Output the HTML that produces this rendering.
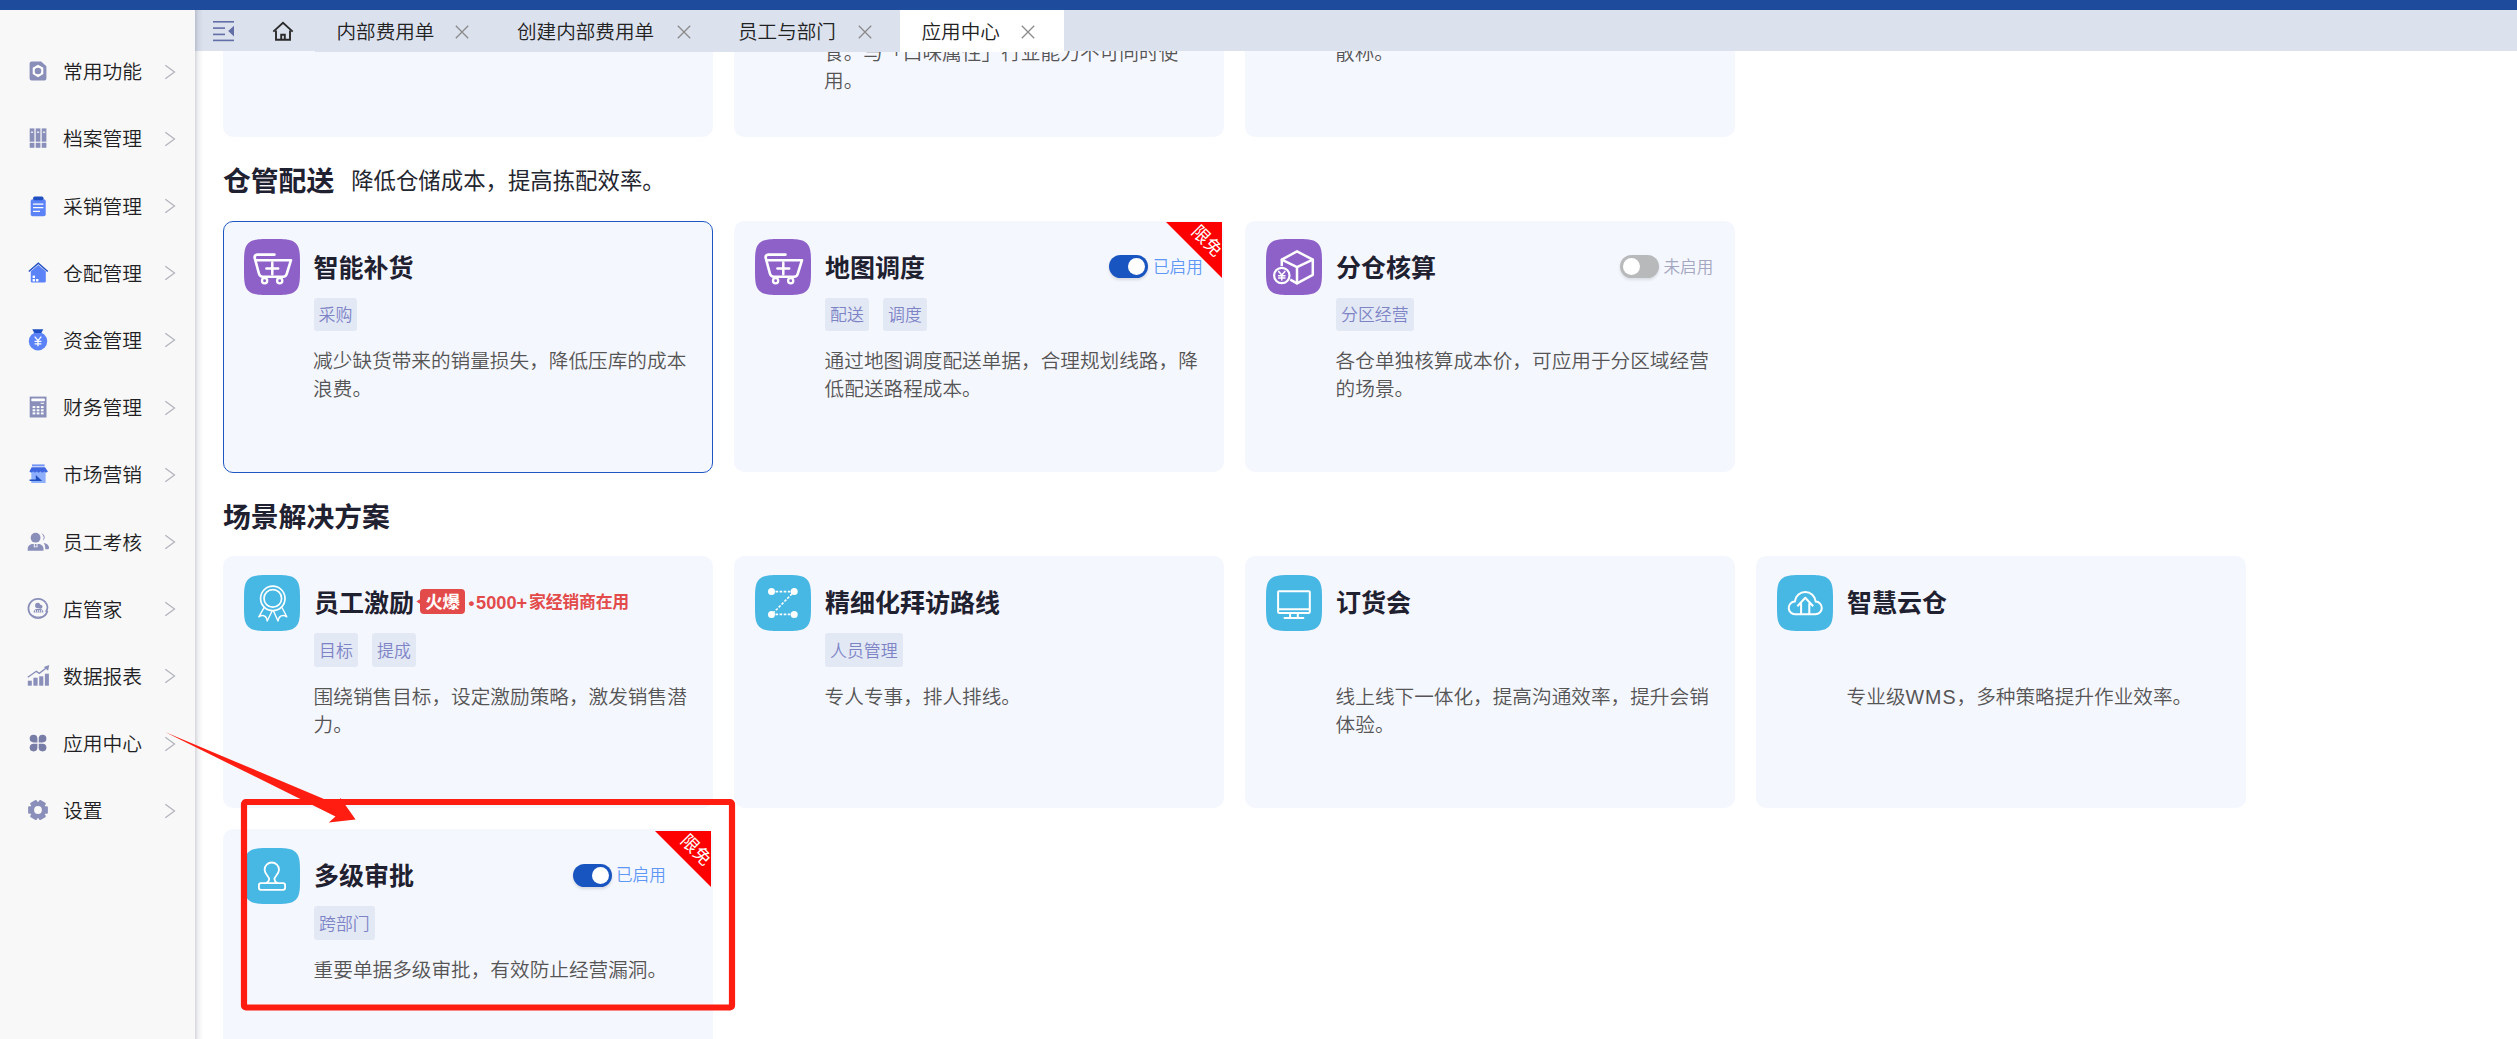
<!DOCTYPE html><html lang="zh-CN"><head><meta charset="utf-8"><title>应用中心</title><style>
*{box-sizing:border-box;margin:0;padding:0}
html,body{width:2517px;height:1039px;overflow:hidden;background:#fff}
body{font-family:"Liberation Sans","Noto Sans CJK SC",sans-serif;position:relative;color:#222;font-weight:350}
.abs{position:absolute}
#topbar{left:0;top:0;width:2517px;height:10px;background:#1e4b9c}
#side{left:0;top:10px;width:195px;height:1029px;background:#f8f8f9}
#sideshadow{left:195px;top:10px;width:8px;height:1029px;background:linear-gradient(to right,rgba(45,55,75,.20),rgba(45,55,75,.07) 40%,rgba(45,55,75,0))}
.mi{position:absolute;left:0;width:195px;height:30px}
.mi .tx{position:absolute;left:63px;top:1px;font-size:19.8px;line-height:30px;color:#1f1f24;white-space:nowrap}
.mi svg.ic{position:absolute;left:26.4px;top:3px;width:24px;height:24px}
.mi svg.ch{position:absolute;left:163px;top:7.3px;width:14px;height:16px}
#tabbar{left:195px;top:10px;width:2322px;height:41px;background:#dce1ee}
.tab{position:absolute;top:10px;height:41.5px;background:#dce1ee;font-size:19.6px;line-height:41.5px;color:#222;white-space:nowrap}
.tab.act{background:#fff}
.tab .t{position:absolute;top:2.2px;margin-left:-0.5px}
.tab svg{position:absolute;top:14.5px;width:14px;height:14px}
#content{left:195px;top:51px;width:2322px;height:988px;overflow:hidden}
.card{position:absolute;width:490px;height:251.5px;background:#f5f7fe;border-radius:10px}
.card.sel{border:1.5px solid #1f57c2}
.card .ico{position:absolute;left:21px;top:18.5px;width:56px;height:56px}
.card .ttl{position:absolute;left:91px;top:28px;font-size:25px;line-height:38px;font-weight:700;color:#1f2130;white-space:nowrap}
.card .tags{position:absolute;left:91px;top:77.5px;height:32.5px;white-space:nowrap;font-size:0}
.card .tag{display:inline-block;overflow:hidden;height:32.5px;line-height:32.5px;padding:0 5px;margin-right:14.3px;background:#e3e8f5;border-radius:3px;color:#7d84c6;font-size:16.9px;vertical-align:top}
.card .desc{position:absolute;left:90.6px;top:125.5px;width:380px;font-size:19.65px;line-height:28px;color:#555}
.sw{position:absolute;width:39px;height:23px;border-radius:12px}
.sw i{position:absolute;top:3px;width:17.4px;height:17.4px;border-radius:50%;background:#fff}
.sw.on{background:#1955c0;box-shadow:0 2px 3px rgba(0,0,0,.12)}
.sw.on i{left:19px}
.sw.off{background:#b8b9bb;box-shadow:0 2px 3px rgba(0,0,0,.10)}
.sw.off i{left:2.6px}
.swt{position:absolute;font-size:16.6px;line-height:24px;white-space:nowrap;margin-top:1.5px}
.swt.on{color:#5f97f6}
.swt.off{color:#a3a6c0}
.rib{position:absolute;width:56px;height:56px;overflow:hidden}
.rib:before{content:"";position:absolute;left:0;top:0;border-style:solid;border-width:0 56px 56px 0;border-color:transparent #fe0000 transparent transparent}
.rib span{position:absolute;left:14.5px;top:9.1px;width:52px;text-align:center;font-size:17.5px;font-weight:400;line-height:20px;color:#fff;transform:rotate(45deg);transform-origin:50% 50%;white-space:nowrap}
.sec{position:absolute;left:28px;white-space:nowrap;color:#1f2130}
.sec b{font-size:27.8px;font-weight:700;line-height:40px;position:relative;top:1.5px}
.sec span{font-size:22.4px;line-height:40px;margin-left:17px;color:#24262f;font-weight:400}
</style></head><body>
<div id="content" class="abs">
<div class="card" style="left:28px;top:-166px"></div>
<div class="card" style="left:539px;top:-166px"></div>
<div class="card" style="left:1050px;top:-166px"></div>
<div class="abs" style="left:629px;top:-12.5px;width:380px;font-size:19.700px;line-height:28px;color:#555">食。与「口味属性」行业能力不可同时使用。</div>
<div class="abs" style="left:1140px;top:-12.5px;width:380px;font-size:19.700px;line-height:28px;color:#555">散称。</div>
<div class="sec" style="top:109px"><b>仓管配送</b><span>降低仓储成本，提高拣配效率。</span></div>
<div class="card sel" style="left:28px;top:170px"><div style="position:absolute;left:-1.5px;top:-1.5px;width:490px;height:251.5px"><svg class="ico" style="top:18.5px" viewBox="0 0 56 56"><path d="M56.00 28.00L55.98 34.87L55.93 37.55L55.84 39.57L55.71 41.25L55.54 42.71L55.34 44.01L55.10 45.18L54.82 46.24L54.50 47.22L54.15 48.13L53.75 48.97L53.31 49.74L52.83 50.46L52.31 51.12L51.74 51.74L51.12 52.31L50.46 52.83L49.74 53.31L48.97 53.75L48.13 54.15L47.22 54.50L46.24 54.82L45.18 55.10L44.01 55.34L42.71 55.54L41.25 55.71L39.57 55.84L37.55 55.93L34.87 55.98L28.00 56.00L21.13 55.98L18.45 55.93L16.43 55.84L14.75 55.71L13.29 55.54L11.99 55.34L10.82 55.10L9.76 54.82L8.78 54.50L7.87 54.15L7.03 53.75L6.26 53.31L5.54 52.83L4.88 52.31L4.26 51.74L3.69 51.12L3.17 50.46L2.69 49.74L2.25 48.97L1.85 48.13L1.50 47.22L1.18 46.24L0.90 45.18L0.66 44.01L0.46 42.71L0.29 41.25L0.16 39.57L0.07 37.55L0.02 34.87L0.00 28.00L0.02 21.13L0.07 18.45L0.16 16.43L0.29 14.75L0.46 13.29L0.66 11.99L0.90 10.82L1.18 9.76L1.50 8.78L1.85 7.87L2.25 7.03L2.69 6.26L3.17 5.54L3.69 4.88L4.26 4.26L4.88 3.69L5.54 3.17L6.26 2.69L7.03 2.25L7.87 1.85L8.78 1.50L9.76 1.18L10.82 0.90L11.99 0.66L13.29 0.46L14.75 0.29L16.43 0.16L18.45 0.07L21.13 0.02L28.00 0.00L34.87 0.02L37.55 0.07L39.57 0.16L41.25 0.29L42.71 0.46L44.01 0.66L45.18 0.90L46.24 1.18L47.22 1.50L48.13 1.85L48.97 2.25L49.74 2.69L50.46 3.17L51.12 3.69L51.74 4.26L52.31 4.88L52.83 5.54L53.31 6.26L53.75 7.03L54.15 7.87L54.50 8.78L54.82 9.76L55.10 10.82L55.34 11.99L55.54 13.29L55.71 14.75L55.84 16.43L55.93 18.45L55.98 21.13Z" fill="#8e61c9"/><g stroke="#fff" fill="none" stroke-linecap="round" stroke-linejoin="round" stroke-width="2.600"><path d="M30.500 15.600H13.200a2.600 2.600 0 0 0-2.500 3.300l4.200 15.600a4.200 4.200 0 0 0 4 3.200h20.300a3.600 3.600 0 0 0 3.500-2.700L47 21.200H11.300"/><path d="M22.400 29.400h11.800M28.300 23.600v11.600" stroke-width="2.500"/><circle cx="20.600" cy="41.800" r="2.600" stroke-width="2.300"/><circle cx="35.700" cy="41.800" r="2.600" stroke-width="2.300"/></g></svg><div class="ttl">智能补货</div><div class="tags" style="top:77.7px;height:32.7px"><span class="tag" style="height:32.7px;line-height:36.30px">采购</span></div><div class="desc" style="top:126.9px">减少缺货带来的销量损失，降低压库的成本浪费。</div></div></div>
<div class="card" style="left:539px;top:169.5px"><svg class="ico" style="top:18.5px" viewBox="0 0 56 56"><path d="M56.00 28.00L55.98 34.87L55.93 37.55L55.84 39.57L55.71 41.25L55.54 42.71L55.34 44.01L55.10 45.18L54.82 46.24L54.50 47.22L54.15 48.13L53.75 48.97L53.31 49.74L52.83 50.46L52.31 51.12L51.74 51.74L51.12 52.31L50.46 52.83L49.74 53.31L48.97 53.75L48.13 54.15L47.22 54.50L46.24 54.82L45.18 55.10L44.01 55.34L42.71 55.54L41.25 55.71L39.57 55.84L37.55 55.93L34.87 55.98L28.00 56.00L21.13 55.98L18.45 55.93L16.43 55.84L14.75 55.71L13.29 55.54L11.99 55.34L10.82 55.10L9.76 54.82L8.78 54.50L7.87 54.15L7.03 53.75L6.26 53.31L5.54 52.83L4.88 52.31L4.26 51.74L3.69 51.12L3.17 50.46L2.69 49.74L2.25 48.97L1.85 48.13L1.50 47.22L1.18 46.24L0.90 45.18L0.66 44.01L0.46 42.71L0.29 41.25L0.16 39.57L0.07 37.55L0.02 34.87L0.00 28.00L0.02 21.13L0.07 18.45L0.16 16.43L0.29 14.75L0.46 13.29L0.66 11.99L0.90 10.82L1.18 9.76L1.50 8.78L1.85 7.87L2.25 7.03L2.69 6.26L3.17 5.54L3.69 4.88L4.26 4.26L4.88 3.69L5.54 3.17L6.26 2.69L7.03 2.25L7.87 1.85L8.78 1.50L9.76 1.18L10.82 0.90L11.99 0.66L13.29 0.46L14.75 0.29L16.43 0.16L18.45 0.07L21.13 0.02L28.00 0.00L34.87 0.02L37.55 0.07L39.57 0.16L41.25 0.29L42.71 0.46L44.01 0.66L45.18 0.90L46.24 1.18L47.22 1.50L48.13 1.85L48.97 2.25L49.74 2.69L50.46 3.17L51.12 3.69L51.74 4.26L52.31 4.88L52.83 5.54L53.31 6.26L53.75 7.03L54.15 7.87L54.50 8.78L54.82 9.76L55.10 10.82L55.34 11.99L55.54 13.29L55.71 14.75L55.84 16.43L55.93 18.45L55.98 21.13Z" fill="#8e61c9"/><g stroke="#fff" fill="none" stroke-linecap="round" stroke-linejoin="round" stroke-width="2.600"><path d="M30.500 15.600H13.200a2.600 2.600 0 0 0-2.500 3.300l4.200 15.600a4.200 4.200 0 0 0 4 3.200h20.300a3.600 3.600 0 0 0 3.500-2.700L47 21.200H11.300"/><path d="M22.400 29.400h11.800M28.300 23.600v11.600" stroke-width="2.500"/><circle cx="20.600" cy="41.800" r="2.600" stroke-width="2.300"/><circle cx="35.700" cy="41.800" r="2.600" stroke-width="2.300"/></g></svg><div class="ttl">地图调度</div><div class="tags" style="top:77.7px;height:32.7px"><span class="tag" style="height:32.7px;line-height:36.30px">配送</span><span class="tag" style="height:32.7px;line-height:36.30px">调度</span></div><div class="desc" style="top:126.9px">通过地图调度配送单据，合理规划线路，降低配送路程成本。</div><div class="rib" style="left:432px;top:1.5px"><span>限免</span></div><div class="sw on" style="left:374.79999999999995px;top:34.5px"><i></i></div><div class="swt on" style="left:419px;top:33.5px">已启用</div></div>
<div class="card" style="left:1050px;top:169.5px"><svg class="ico" style="top:18.5px" viewBox="0 0 56 56"><path d="M56.00 28.00L55.98 34.87L55.93 37.55L55.84 39.57L55.71 41.25L55.54 42.71L55.34 44.01L55.10 45.18L54.82 46.24L54.50 47.22L54.15 48.13L53.75 48.97L53.31 49.74L52.83 50.46L52.31 51.12L51.74 51.74L51.12 52.31L50.46 52.83L49.74 53.31L48.97 53.75L48.13 54.15L47.22 54.50L46.24 54.82L45.18 55.10L44.01 55.34L42.71 55.54L41.25 55.71L39.57 55.84L37.55 55.93L34.87 55.98L28.00 56.00L21.13 55.98L18.45 55.93L16.43 55.84L14.75 55.71L13.29 55.54L11.99 55.34L10.82 55.10L9.76 54.82L8.78 54.50L7.87 54.15L7.03 53.75L6.26 53.31L5.54 52.83L4.88 52.31L4.26 51.74L3.69 51.12L3.17 50.46L2.69 49.74L2.25 48.97L1.85 48.13L1.50 47.22L1.18 46.24L0.90 45.18L0.66 44.01L0.46 42.71L0.29 41.25L0.16 39.57L0.07 37.55L0.02 34.87L0.00 28.00L0.02 21.13L0.07 18.45L0.16 16.43L0.29 14.75L0.46 13.29L0.66 11.99L0.90 10.82L1.18 9.76L1.50 8.78L1.85 7.87L2.25 7.03L2.69 6.26L3.17 5.54L3.69 4.88L4.26 4.26L4.88 3.69L5.54 3.17L6.26 2.69L7.03 2.25L7.87 1.85L8.78 1.50L9.76 1.18L10.82 0.90L11.99 0.66L13.29 0.46L14.75 0.29L16.43 0.16L18.45 0.07L21.13 0.02L28.00 0.00L34.87 0.02L37.55 0.07L39.57 0.16L41.25 0.29L42.71 0.46L44.01 0.66L45.18 0.90L46.24 1.18L47.22 1.50L48.13 1.85L48.97 2.25L49.74 2.69L50.46 3.17L51.12 3.69L51.74 4.26L52.31 4.88L52.83 5.54L53.31 6.26L53.75 7.03L54.15 7.87L54.50 8.78L54.82 9.76L55.10 10.82L55.34 11.99L55.54 13.29L55.71 14.75L55.84 16.43L55.93 18.45L55.98 21.13Z" fill="#8e61c9"/><g stroke="#fff" fill="none" stroke-linecap="round" stroke-linejoin="round" stroke-width="2.500"><path d="M31 12.300L46.800 20.700V35.800L31 44.300 15.800 35.800V20.700z"/><path d="M15.800 20.700L31 28.100 46.800 20.700M31 28.100V44.300"/></g><circle cx="15.800" cy="36.500" r="9.500" fill="#8e61c9"/><circle cx="15.800" cy="36.500" r="7.700" stroke="#fff" stroke-width="2.200" fill="#8e61c9"/><g stroke="#fff" stroke-width="1.500" fill="none" stroke-linecap="round"><path d="M12.700 32.400l3.100 3.700 3.100-3.700M15.800 36.100v5M12.600 36.700h6.400M12.600 39h6.400"/></g></svg><div class="ttl">分仓核算</div><div class="tags" style="top:77.7px;height:32.7px"><span class="tag" style="height:32.7px;line-height:36.30px">分区经营</span></div><div class="desc" style="top:126.9px">各仓单独核算成本价，可应用于分区域经营的场景。</div><div class="sw off" style="left:375px;top:34.5px"><i></i></div><div class="swt off" style="left:418.5px;top:33.5px">未启用</div></div>
<div class="sec" style="top:445px"><b>场景解决方案</b></div>
<div class="card" style="left:28px;top:505.29999999999995px"><svg class="ico" style="top:18.5px" viewBox="0 0 56 56"><path d="M56.00 28.00L55.98 34.87L55.93 37.55L55.84 39.57L55.71 41.25L55.54 42.71L55.34 44.01L55.10 45.18L54.82 46.24L54.50 47.22L54.15 48.13L53.75 48.97L53.31 49.74L52.83 50.46L52.31 51.12L51.74 51.74L51.12 52.31L50.46 52.83L49.74 53.31L48.97 53.75L48.13 54.15L47.22 54.50L46.24 54.82L45.18 55.10L44.01 55.34L42.71 55.54L41.25 55.71L39.57 55.84L37.55 55.93L34.87 55.98L28.00 56.00L21.13 55.98L18.45 55.93L16.43 55.84L14.75 55.71L13.29 55.54L11.99 55.34L10.82 55.10L9.76 54.82L8.78 54.50L7.87 54.15L7.03 53.75L6.26 53.31L5.54 52.83L4.88 52.31L4.26 51.74L3.69 51.12L3.17 50.46L2.69 49.74L2.25 48.97L1.85 48.13L1.50 47.22L1.18 46.24L0.90 45.18L0.66 44.01L0.46 42.71L0.29 41.25L0.16 39.57L0.07 37.55L0.02 34.87L0.00 28.00L0.02 21.13L0.07 18.45L0.16 16.43L0.29 14.75L0.46 13.29L0.66 11.99L0.90 10.82L1.18 9.76L1.50 8.78L1.85 7.87L2.25 7.03L2.69 6.26L3.17 5.54L3.69 4.88L4.26 4.26L4.88 3.69L5.54 3.17L6.26 2.69L7.03 2.25L7.87 1.85L8.78 1.50L9.76 1.18L10.82 0.90L11.99 0.66L13.29 0.46L14.75 0.29L16.43 0.16L18.45 0.07L21.13 0.02L28.00 0.00L34.87 0.02L37.55 0.07L39.57 0.16L41.25 0.29L42.71 0.46L44.01 0.66L45.18 0.90L46.24 1.18L47.22 1.50L48.13 1.85L48.97 2.25L49.74 2.69L50.46 3.17L51.12 3.69L51.74 4.26L52.31 4.88L52.83 5.54L53.31 6.26L53.75 7.03L54.15 7.87L54.50 8.78L54.82 9.76L55.10 10.82L55.34 11.99L55.54 13.29L55.71 14.75L55.84 16.43L55.93 18.45L55.98 21.13Z" fill="#47b7e3"/><g stroke="#fff" fill="none" stroke-linecap="round" stroke-linejoin="round" stroke-width="1.700"><circle cx="28.800" cy="23.400" r="12.200"/><circle cx="28.800" cy="23.400" r="8.800"/><path stroke-width="1.400" d="M19.900 32.800L14.800 41.800c3.800-2.600 8-1.300 8.400 4.200L28 36.300"/><path stroke-width="1.400" d="M38.100 32.800L42.800 41.800c-3.800-2.600-8-1.300-8.800 4.200L29.600 36.300"/></g></svg><div class="ttl">员工激励</div><div class="tags" style="top:76.75px;height:34px"><span class="tag" style="height:34px;line-height:37.00px">目标</span><span class="tag" style="height:34px;line-height:37.00px">提成</span></div><div class="desc" style="top:126.7px">围绕销售目标，设定激励策略，激发销售潜力。</div><span style="position:absolute;left:192.700px;top:32.700px;height:24.800px;white-space:nowrap"><svg style="position:absolute;left:0;top:8px;width:6px;height:9px" viewBox="0 0 6 9"><path d="M5.500 1.200L0.300 4.500 5.500 7.800z" fill="#e34b4b"/></svg><b style="position:absolute;left:4.300px;top:0;height:24.800px;width:45px;background:#e34b4b;border-radius:4px"></b><b style="position:absolute;left:4.300px;top:1px;height:24.800px;width:45px;color:#fff;font-size:17.500px;line-height:24.800px;text-align:center;font-weight:700;letter-spacing:-0.3px">火爆</b><b style="position:absolute;left:52.800px;top:1.600px;color:#e34b4b;font-size:16.900px;line-height:24.800px;font-weight:700;white-space:nowrap">•<span style="font-size:18.200px;margin-left:1.700px">5000+</span></b><b style="position:absolute;left:113.400px;top:2px;color:#e34b4b;font-size:16.900px;line-height:24.800px;font-weight:700;white-space:nowrap;letter-spacing:-0.25px">家经销商在用</b></span></div>
<div class="card" style="left:539px;top:505.29999999999995px"><svg class="ico" style="top:18.5px" viewBox="0 0 56 56"><path d="M56.00 28.00L55.98 34.87L55.93 37.55L55.84 39.57L55.71 41.25L55.54 42.71L55.34 44.01L55.10 45.18L54.82 46.24L54.50 47.22L54.15 48.13L53.75 48.97L53.31 49.74L52.83 50.46L52.31 51.12L51.74 51.74L51.12 52.31L50.46 52.83L49.74 53.31L48.97 53.75L48.13 54.15L47.22 54.50L46.24 54.82L45.18 55.10L44.01 55.34L42.71 55.54L41.25 55.71L39.57 55.84L37.55 55.93L34.87 55.98L28.00 56.00L21.13 55.98L18.45 55.93L16.43 55.84L14.75 55.71L13.29 55.54L11.99 55.34L10.82 55.10L9.76 54.82L8.78 54.50L7.87 54.15L7.03 53.75L6.26 53.31L5.54 52.83L4.88 52.31L4.26 51.74L3.69 51.12L3.17 50.46L2.69 49.74L2.25 48.97L1.85 48.13L1.50 47.22L1.18 46.24L0.90 45.18L0.66 44.01L0.46 42.71L0.29 41.25L0.16 39.57L0.07 37.55L0.02 34.87L0.00 28.00L0.02 21.13L0.07 18.45L0.16 16.43L0.29 14.75L0.46 13.29L0.66 11.99L0.90 10.82L1.18 9.76L1.50 8.78L1.85 7.87L2.25 7.03L2.69 6.26L3.17 5.54L3.69 4.88L4.26 4.26L4.88 3.69L5.54 3.17L6.26 2.69L7.03 2.25L7.87 1.85L8.78 1.50L9.76 1.18L10.82 0.90L11.99 0.66L13.29 0.46L14.75 0.29L16.43 0.16L18.45 0.07L21.13 0.02L28.00 0.00L34.87 0.02L37.55 0.07L39.57 0.16L41.25 0.29L42.71 0.46L44.01 0.66L45.18 0.90L46.24 1.18L47.22 1.50L48.13 1.85L48.97 2.25L49.74 2.69L50.46 3.17L51.12 3.69L51.74 4.26L52.31 4.88L52.83 5.54L53.31 6.26L53.75 7.03L54.15 7.87L54.50 8.78L54.82 9.76L55.10 10.82L55.34 11.99L55.54 13.29L55.71 14.75L55.84 16.43L55.93 18.45L55.98 21.13Z" fill="#47b7e3"/><g stroke="#fff" stroke-width="1.600" stroke-dasharray="2.600 1.500" fill="none"><path d="M20.500 16.600H36M20.500 39.400H36M37 18.800L19 37.200"/></g><g fill="#fff"><circle cx="16.500" cy="16.600" r="3.500"/><circle cx="39.200" cy="16.600" r="3.500"/><circle cx="16.500" cy="39.400" r="3.500"/><circle cx="39.200" cy="39.400" r="3.500"/></g></svg><div class="ttl">精细化拜访路线</div><div class="tags" style="top:76.75px;height:34px"><span class="tag" style="height:34px;line-height:37.00px">人员管理</span></div><div class="desc" style="top:126.7px">专人专事，排人排线。</div></div>
<div class="card" style="left:1050px;top:505.29999999999995px"><svg class="ico" style="top:18.5px" viewBox="0 0 56 56"><path d="M56.00 28.00L55.98 34.87L55.93 37.55L55.84 39.57L55.71 41.25L55.54 42.71L55.34 44.01L55.10 45.18L54.82 46.24L54.50 47.22L54.15 48.13L53.75 48.97L53.31 49.74L52.83 50.46L52.31 51.12L51.74 51.74L51.12 52.31L50.46 52.83L49.74 53.31L48.97 53.75L48.13 54.15L47.22 54.50L46.24 54.82L45.18 55.10L44.01 55.34L42.71 55.54L41.25 55.71L39.57 55.84L37.55 55.93L34.87 55.98L28.00 56.00L21.13 55.98L18.45 55.93L16.43 55.84L14.75 55.71L13.29 55.54L11.99 55.34L10.82 55.10L9.76 54.82L8.78 54.50L7.87 54.15L7.03 53.75L6.26 53.31L5.54 52.83L4.88 52.31L4.26 51.74L3.69 51.12L3.17 50.46L2.69 49.74L2.25 48.97L1.85 48.13L1.50 47.22L1.18 46.24L0.90 45.18L0.66 44.01L0.46 42.71L0.29 41.25L0.16 39.57L0.07 37.55L0.02 34.87L0.00 28.00L0.02 21.13L0.07 18.45L0.16 16.43L0.29 14.75L0.46 13.29L0.66 11.99L0.90 10.82L1.18 9.76L1.50 8.78L1.85 7.87L2.25 7.03L2.69 6.26L3.17 5.54L3.69 4.88L4.26 4.26L4.88 3.69L5.54 3.17L6.26 2.69L7.03 2.25L7.87 1.85L8.78 1.50L9.76 1.18L10.82 0.90L11.99 0.66L13.29 0.46L14.75 0.29L16.43 0.16L18.45 0.07L21.13 0.02L28.00 0.00L34.87 0.02L37.55 0.07L39.57 0.16L41.25 0.29L42.71 0.46L44.01 0.66L45.18 0.90L46.24 1.18L47.22 1.50L48.13 1.85L48.97 2.25L49.74 2.69L50.46 3.17L51.12 3.69L51.74 4.26L52.31 4.88L52.83 5.54L53.31 6.26L53.75 7.03L54.15 7.87L54.50 8.78L54.82 9.76L55.10 10.82L55.34 11.99L55.54 13.29L55.71 14.75L55.84 16.43L55.93 18.45L55.98 21.13Z" fill="#47b7e3"/><g stroke="#fff" fill="none" stroke-width="2" stroke-linejoin="round"><rect x="12.100" y="16.300" width="31.700" height="21.600" rx="0.800"/><path d="M12.100 34.200h31.700M24.100 38v4.900M31.800 38v4.900"/><path d="M18.500 42.900h18.900" stroke-linecap="round"/></g></svg><div class="ttl">订货会</div><div class="desc" style="top:126.7px">线上线下一体化，提高沟通效率，提升会销体验。</div></div>
<div class="card" style="left:1561px;top:505.29999999999995px"><svg class="ico" style="top:18.5px" viewBox="0 0 56 56"><path d="M56.00 28.00L55.98 34.87L55.93 37.55L55.84 39.57L55.71 41.25L55.54 42.71L55.34 44.01L55.10 45.18L54.82 46.24L54.50 47.22L54.15 48.13L53.75 48.97L53.31 49.74L52.83 50.46L52.31 51.12L51.74 51.74L51.12 52.31L50.46 52.83L49.74 53.31L48.97 53.75L48.13 54.15L47.22 54.50L46.24 54.82L45.18 55.10L44.01 55.34L42.71 55.54L41.25 55.71L39.57 55.84L37.55 55.93L34.87 55.98L28.00 56.00L21.13 55.98L18.45 55.93L16.43 55.84L14.75 55.71L13.29 55.54L11.99 55.34L10.82 55.10L9.76 54.82L8.78 54.50L7.87 54.15L7.03 53.75L6.26 53.31L5.54 52.83L4.88 52.31L4.26 51.74L3.69 51.12L3.17 50.46L2.69 49.74L2.25 48.97L1.85 48.13L1.50 47.22L1.18 46.24L0.90 45.18L0.66 44.01L0.46 42.71L0.29 41.25L0.16 39.57L0.07 37.55L0.02 34.87L0.00 28.00L0.02 21.13L0.07 18.45L0.16 16.43L0.29 14.75L0.46 13.29L0.66 11.99L0.90 10.82L1.18 9.76L1.50 8.78L1.85 7.87L2.25 7.03L2.69 6.26L3.17 5.54L3.69 4.88L4.26 4.26L4.88 3.69L5.54 3.17L6.26 2.69L7.03 2.25L7.87 1.85L8.78 1.50L9.76 1.18L10.82 0.90L11.99 0.66L13.29 0.46L14.75 0.29L16.43 0.16L18.45 0.07L21.13 0.02L28.00 0.00L34.87 0.02L37.55 0.07L39.57 0.16L41.25 0.29L42.71 0.46L44.01 0.66L45.18 0.90L46.24 1.18L47.22 1.50L48.13 1.85L48.97 2.25L49.74 2.69L50.46 3.17L51.12 3.69L51.74 4.26L52.31 4.88L52.83 5.54L53.31 6.26L53.75 7.03L54.15 7.87L54.50 8.78L54.82 9.76L55.10 10.82L55.34 11.99L55.54 13.29L55.71 14.75L55.84 16.43L55.93 18.45L55.98 21.13Z" fill="#47b7e3"/><g stroke="#fff" fill="none" stroke-linecap="round" stroke-linejoin="round" stroke-width="2"><path d="M18.200 39.200a6.300 6.300 0 0 1-.4-12.600 10.500 10.500 0 0 1 20.900 0 6.300 6.300 0 0 1-.4 12.600z"/><path d="M20.400 31.300l7.900-8.500 7.900 8.500M24.100 28.200V39M32.300 28.200V39" stroke-linecap="butt"/></g></svg><div class="ttl">智慧云仓</div><div class="desc" style="top:126.7px">专业级<span style="letter-spacing:1px">WMS</span>，多种策略提升作业效率。</div></div>
<div class="card" style="left:28px;top:777.8px"><svg class="ico" style="top:19.2px" viewBox="0 0 56 56"><path d="M56.00 28.00L55.98 34.87L55.93 37.55L55.84 39.57L55.71 41.25L55.54 42.71L55.34 44.01L55.10 45.18L54.82 46.24L54.50 47.22L54.15 48.13L53.75 48.97L53.31 49.74L52.83 50.46L52.31 51.12L51.74 51.74L51.12 52.31L50.46 52.83L49.74 53.31L48.97 53.75L48.13 54.15L47.22 54.50L46.24 54.82L45.18 55.10L44.01 55.34L42.71 55.54L41.25 55.71L39.57 55.84L37.55 55.93L34.87 55.98L28.00 56.00L21.13 55.98L18.45 55.93L16.43 55.84L14.75 55.71L13.29 55.54L11.99 55.34L10.82 55.10L9.76 54.82L8.78 54.50L7.87 54.15L7.03 53.75L6.26 53.31L5.54 52.83L4.88 52.31L4.26 51.74L3.69 51.12L3.17 50.46L2.69 49.74L2.25 48.97L1.85 48.13L1.50 47.22L1.18 46.24L0.90 45.18L0.66 44.01L0.46 42.71L0.29 41.25L0.16 39.57L0.07 37.55L0.02 34.87L0.00 28.00L0.02 21.13L0.07 18.45L0.16 16.43L0.29 14.75L0.46 13.29L0.66 11.99L0.90 10.82L1.18 9.76L1.50 8.78L1.85 7.87L2.25 7.03L2.69 6.26L3.17 5.54L3.69 4.88L4.26 4.26L4.88 3.69L5.54 3.17L6.26 2.69L7.03 2.25L7.87 1.85L8.78 1.50L9.76 1.18L10.82 0.90L11.99 0.66L13.29 0.46L14.75 0.29L16.43 0.16L18.45 0.07L21.13 0.02L28.00 0.00L34.87 0.02L37.55 0.07L39.57 0.16L41.25 0.29L42.71 0.46L44.01 0.66L45.18 0.90L46.24 1.18L47.22 1.50L48.13 1.85L48.97 2.25L49.74 2.69L50.46 3.17L51.12 3.69L51.74 4.26L52.31 4.88L52.83 5.54L53.31 6.26L53.75 7.03L54.15 7.87L54.50 8.78L54.82 9.76L55.10 10.82L55.34 11.99L55.54 13.29L55.71 14.75L55.84 16.43L55.93 18.45L55.98 21.13Z" fill="#47b7e3"/><g stroke="#fff" fill="none" stroke-linecap="round" stroke-linejoin="round" stroke-width="1.800"><path d="M22.400 35c1.700-1 2.800-2.300 2.800-3.900 0-2.300-4.600-5.300-4.600-9.400a7.200 7.200 0 0 1 14.400 0c0 4.100-4.600 7.100-4.600 9.400 0 1.600 1.100 2.900 2.800 3.900"/><rect x="14.900" y="35.200" width="26.200" height="6.600" rx="2"/></g></svg><div class="ttl">多级审批</div><div class="tags" style="top:77.2px;height:34px"><span class="tag" style="height:34px;line-height:38.00px">跨部门</span></div><div class="desc" style="top:127.5px">重要单据多级审批，有效防止经营漏洞。</div><div class="rib" style="left:432px;top:2.2px"><span>限免</span></div><div class="sw on" style="left:350px;top:35.200000000000045px"><i></i></div><div class="swt on" style="left:393px;top:34.200000000000045px">已启用</div></div>
</div>
<div id="tabbar" class="abs"></div>
<svg class="abs" style="left:212px;top:20px;width:24px;height:22px" viewBox="0 0 24 22"><g fill="#626ea6"><rect x="1" y="1" width="21" height="1.600"/><rect x="1" y="7.300" width="12" height="1.600"/><rect x="1" y="13.600" width="12" height="1.600"/><rect x="1" y="19.600" width="21" height="1.600"/><path d="M22 5.800v10.600l-5.800-5.300z"/></g></svg>
<svg class="abs" style="left:271px;top:20px;width:24px;height:22px" viewBox="0 0 24 22"><g fill="none" stroke="#2b2b2b" stroke-width="1.900" stroke-linejoin="miter"><path d="M2.300 11.600L12 2.900l9.700 8.700"/><path d="M5 10.400v9.400h14v-9.400"/><path d="M10.200 19.800v-5h3.600v5"/></g></svg>
<div class="tab" style="left:314.5px;width:181px"><span class="t" style="left:22.5px">内部费用单</span><svg style="left:140.5px" viewBox="0 0 14 14"><path d="M0.800 0.800l12.400 12.400M13.200 0.800L0.800 13.200" stroke="#8a8a8a" stroke-width="1.300" fill="none"/></svg></div>
<div class="tab" style="left:495.5px;width:221px"><span class="t" style="left:22.0px">创建内部费用单</span><svg style="left:181.0px" viewBox="0 0 14 14"><path d="M0.800 0.800l12.400 12.400M13.200 0.800L0.800 13.200" stroke="#8a8a8a" stroke-width="1.300" fill="none"/></svg></div>
<div class="tab" style="left:716.5px;width:183px"><span class="t" style="left:22.0px">员工与部门</span><svg style="left:141.5px" viewBox="0 0 14 14"><path d="M0.800 0.800l12.400 12.400M13.200 0.800L0.800 13.200" stroke="#8a8a8a" stroke-width="1.300" fill="none"/></svg></div>
<div class="tab act" style="left:899.6px;width:164px"><span class="t" style="left:22.399999999999977px">应用中心</span><svg style="left:121.60000000000002px" viewBox="0 0 14 14"><path d="M0.800 0.800l12.400 12.400M13.200 0.800L0.800 13.200" stroke="#8a8a8a" stroke-width="1.300" fill="none"/></svg></div>
<div id="side" class="abs"></div><div id="sideshadow" class="abs"></div>
<div class="mi" style="top:56.25px"><svg class="ic" viewBox="0 0 24 24"><path d="M5.6 2.5h9.6l5.2 4.8v12.2a2 2 0 0 1-2 2H5.6a2 2 0 0 1-2-2V4.500a2 2 0 0 1 2-2z" fill="#8a8fba"/><path d="M12 5.700l5.300 3.100v6.300L12 18.200l-5.300-3.100V8.800z" fill="#fff"/><circle cx="12" cy="12" r="3.300" fill="#8a8fba"/></svg><span class="tx">常用功能</span><svg class="ch" viewBox="0 0 14 16"><path d="M2.300 1.300l9.200 6.700-9.200 6.700" fill="none" stroke="#b3b5bd" stroke-width="1.300"/></svg></div>
<div class="mi" style="top:123.45px"><svg class="ic" viewBox="0 0 24 24"><g fill="#8a8fba"><rect x="3.700" y="2.400" width="4.700" height="19.400"/><rect x="9.700" y="2.400" width="4.700" height="19.400"/><rect x="15.700" y="2.400" width="4.700" height="19.400"/></g><g fill="#f8f8f9"><rect x="3" y="15.700" width="18" height="1.100"/><rect x="4.900" y="5.600" width="2.300" height="1.200"/><rect x="10.900" y="5.600" width="2.300" height="1.200"/><rect x="16.900" y="5.600" width="2.300" height="1.200"/></g></svg><span class="tx">档案管理</span><svg class="ch" viewBox="0 0 14 16"><path d="M2.300 1.300l9.200 6.700-9.200 6.700" fill="none" stroke="#b3b5bd" stroke-width="1.300"/></svg></div>
<div class="mi" style="top:190.65px"><svg class="ic" viewBox="0 0 24 24"><rect x="4.700" y="5.200" width="15" height="17" rx="2" fill="#5b82f7"/><rect x="7" y="2.600" width="10.600" height="3.600" rx="1.800" fill="#1f4fc0"/><g stroke="#fff" stroke-width="1.200"><path d="M7 10.100h10.400M7 13.700h10.400M7 17.300h7"/></g></svg><span class="tx">采销管理</span><svg class="ch" viewBox="0 0 14 16"><path d="M2.300 1.300l9.200 6.700-9.200 6.700" fill="none" stroke="#b3b5bd" stroke-width="1.300"/></svg></div>
<div class="mi" style="top:257.85px"><svg class="ic" viewBox="0 0 24 24"><path d="M4.800 10.200l7.500-6.300 7.500 6.300v10a1.300 1.300 0 0 1-1.300 1.300H6.100a1.300 1.300 0 0 1-1.300-1.300z" fill="#5b82f7"/><path d="M2.800 10.600L12.300 2.200l9.500 8.400" fill="none" stroke="#1f4fc0" stroke-width="1.400"/><g fill="#fff"><rect x="6.600" y="14.600" width="2.400" height="2.400"/><rect x="6.600" y="18" width="2.400" height="2.400"/><rect x="10" y="18" width="2.400" height="2.400"/></g></svg><span class="tx">仓配管理</span><svg class="ch" viewBox="0 0 14 16"><path d="M2.300 1.300l9.200 6.700-9.200 6.700" fill="none" stroke="#b3b5bd" stroke-width="1.300"/></svg></div>
<div class="mi" style="top:325.05px"><svg class="ic" viewBox="0 0 24 24"><circle cx="12" cy="13.300" r="9.200" fill="#5b82f7"/><path d="M6.300 1.200h11l-2 3.700H8.300z" fill="#1f4fc0"/><g stroke="#fff" stroke-width="1.300" fill="none"><path d="M8.700 8.700L12 12.600l3.300-3.900M12 12.600v5.600M8.600 13.300h6.800M8.600 15.800h6.800"/></g></svg><span class="tx">资金管理</span><svg class="ch" viewBox="0 0 14 16"><path d="M2.300 1.300l9.200 6.700-9.200 6.700" fill="none" stroke="#b3b5bd" stroke-width="1.300"/></svg></div>
<div class="mi" style="top:392.25px"><svg class="ic" viewBox="0 0 24 24"><rect x="3.700" y="1.600" width="16.800" height="20.900" fill="#8a8fba"/><g fill="#fff"><rect x="5.200" y="3.600" width="13.800" height="2.700" rx="1.200"/><rect x="14.600" y="7.800" width="3.500" height="1"/><rect x="6.600" y="11.100" width="2.700" height="2"/><rect x="10.700" y="11.100" width="2.700" height="2"/><rect x="14.900" y="11.100" width="2.700" height="2"/><rect x="6.600" y="14.300" width="2.700" height="2"/><rect x="10.700" y="14.300" width="2.700" height="2"/><rect x="14.900" y="14.300" width="2.700" height="2"/><rect x="6.600" y="17.400" width="2.700" height="2"/><rect x="10.700" y="17.400" width="2.700" height="2"/><rect x="14.900" y="17.400" width="2.700" height="2"/></g></svg><span class="tx">财务管理</span><svg class="ch" viewBox="0 0 14 16"><path d="M2.300 1.300l9.200 6.700-9.200 6.700" fill="none" stroke="#b3b5bd" stroke-width="1.300"/></svg></div>
<div class="mi" style="top:459.45px"><svg class="ic" viewBox="0 0 24 24"><rect x="6" y="2.400" width="12.600" height="2" fill="#7395f6"/><rect x="5.300" y="9.500" width="14.300" height="11.500" fill="#8eaffb"/><path d="M5.600 5.200h13.400l2.900 4.300c-1.200 1.300-2.600 1.300-3.700 0-1.100 1.300-2.600 1.300-3.700 0-1.100 1.300-2.600 1.300-3.700 0-1.100 1.300-2.600 1.300-3.700 0-1.100 1.300-2.500 1.300-3.700 0z" fill="#3f67e2"/><path d="M3.600 17.600h6.200v-4.600l6.400 5.900H3.600z" fill="#1f4fc0"/></svg><span class="tx">市场营销</span><svg class="ch" viewBox="0 0 14 16"><path d="M2.300 1.300l9.200 6.700-9.200 6.700" fill="none" stroke="#b3b5bd" stroke-width="1.300"/></svg></div>
<div class="mi" style="top:526.65px"><svg class="ic" viewBox="0 0 24 24"><g fill="#8a8fba"><circle cx="9.600" cy="7.700" r="4.900"/><path d="M1.700 20.700v-1.700c0-3 2.600-4.900 5.300-4.900h5.200c2.700 0 5.300 1.900 5.300 4.900v1.700z"/><path d="M15.300 3.400c3.600.5 4.600 5.300 1.400 7.400 1.700-2.300 1.200-5.600-1.400-7.400z"/><path d="M17.600 13c3 .3 5.400 2.100 5.400 4.800 0 1-.6 1.500-1.300 1.500h-2.400c0-2.600-.4-4.600-1.700-6.300z"/></g><path d="M7.800 14.100h1v2.400h1.700v-2.400h1v3.200H7.800z" fill="#f8f8f9"/></svg><span class="tx">员工考核</span><svg class="ch" viewBox="0 0 14 16"><path d="M2.300 1.300l9.200 6.700-9.200 6.700" fill="none" stroke="#b3b5bd" stroke-width="1.300"/></svg></div>
<div class="mi" style="top:593.85px"><svg class="ic" viewBox="0 0 24 24"><path d="M21.400 13.700A9.600 9.600 0 1 1 19.500 5.400" fill="none" stroke="#8a8fba" stroke-width="1.900"/><path d="M4.200 16.500c3.500 5 11.500 5.600 16.300.5-4.600 3.400-11.400 3.600-16.300-.5z" fill="#8a8fba"/><path d="M19.500 5.400c2.200 2.600 2.500 6.400.2 9.300" fill="none" stroke="#8a8fba" stroke-width="1.700"/><g fill="#8a8fba"><circle cx="11.700" cy="8.400" r="2.600"/><circle cx="14.500" cy="9.700" r="2"/><path d="M7.600 15.500c0-2.500 1.800-3.700 4.100-3.700h1.600c2.300 0 4.100 1.200 4.100 3.700z"/></g><g fill="#f8f8f9"><rect x="9.200" y="13" width=".8" height="2.500"/><rect x="11.300" y="13" width=".8" height="2.500"/><rect x="13.300" y="13" width=".8" height="2.500"/><rect x="15.300" y="13" width=".8" height="2.500"/></g></svg><span class="tx">店管家</span><svg class="ch" viewBox="0 0 14 16"><path d="M2.300 1.300l9.200 6.700-9.200 6.700" fill="none" stroke="#b3b5bd" stroke-width="1.300"/></svg></div>
<div class="mi" style="top:661.05px"><svg class="ic" viewBox="0 0 24 24"><g fill="#8a8fba"><rect x="1.800" y="16.700" width="4" height="5"/><rect x="7.400" y="13.700" width="4.200" height="8"/><rect x="13.200" y="12.300" width="4.100" height="9.400"/><rect x="18.900" y="9.700" width="4" height="12"/><path d="M23.200 1.100l-1.100 5.700-4.300-3.900z"/></g><path d="M1.800 13.300l8.500-6 3 2 7.300-5.500" fill="none" stroke="#8a8fba" stroke-width="1.400"/></svg><span class="tx">数据报表</span><svg class="ch" viewBox="0 0 14 16"><path d="M2.300 1.300l9.200 6.700-9.200 6.700" fill="none" stroke="#b3b5bd" stroke-width="1.300"/></svg></div>
<div class="mi" style="top:728.25px"><svg class="ic" viewBox="0 0 24 24"><g fill="#787da7"><path d="M11.400 11.400H7.600a3.850 3.850 0 1 1 3.800-3.850z"/><path d="M12.700 11.400V7.550a3.850 3.850 0 1 1 3.850 3.850z"/><path d="M11.400 12.700v3.850a3.850 3.850 0 1 1-3.850-3.850z"/><path d="M12.700 12.700h3.850a3.850 3.850 0 1 1-3.850 3.850z"/></g></svg><span class="tx">应用中心</span><svg class="ch" viewBox="0 0 14 16"><path d="M2.300 1.300l9.200 6.700-9.200 6.700" fill="none" stroke="#b3b5bd" stroke-width="1.300"/></svg></div>
<div class="mi" style="top:795.45px"><svg class="ic" viewBox="0 0 24 24"><path d="M12.72 5.04 L14.06 2.93 L18.82 5.68 L17.67 7.89 L18.39 9.15 L20.88 9.25 L20.88 14.75 L18.39 14.85 L17.67 16.11 L18.82 18.32 L14.06 21.07 L12.72 18.96 L11.28 18.96 L9.94 21.07 L5.18 18.32 L6.33 16.11 L5.61 14.85 L3.12 14.75 L3.12 9.25 L5.61 9.15 L6.33 7.89 L5.18 5.68 L9.94 2.93 L11.28 5.04Z" fill="#8a8fba" stroke="#8a8fba" stroke-width="2" stroke-linejoin="round"/><circle cx="12" cy="12" r="3.900" fill="#f8f8f9"/></svg><span class="tx">设置</span><svg class="ch" viewBox="0 0 14 16"><path d="M2.300 1.300l9.200 6.700-9.200 6.700" fill="none" stroke="#b3b5bd" stroke-width="1.300"/></svg></div>
<div id="topbar" class="abs"></div>
<svg class="abs" style="left:0;top:0;width:2517px;height:1039px;pointer-events:none" viewBox="0 0 2517 1039"><rect x="244" y="802" width="488" height="205.500" rx="2" fill="none" stroke="#fe1d10" stroke-width="6.200"/><path d="M165 732L337 804.500 340.400 798 355.600 819.600 328.800 822.500 335.500 816.500z" fill="#fe1d10"/></svg>
</body></html>
